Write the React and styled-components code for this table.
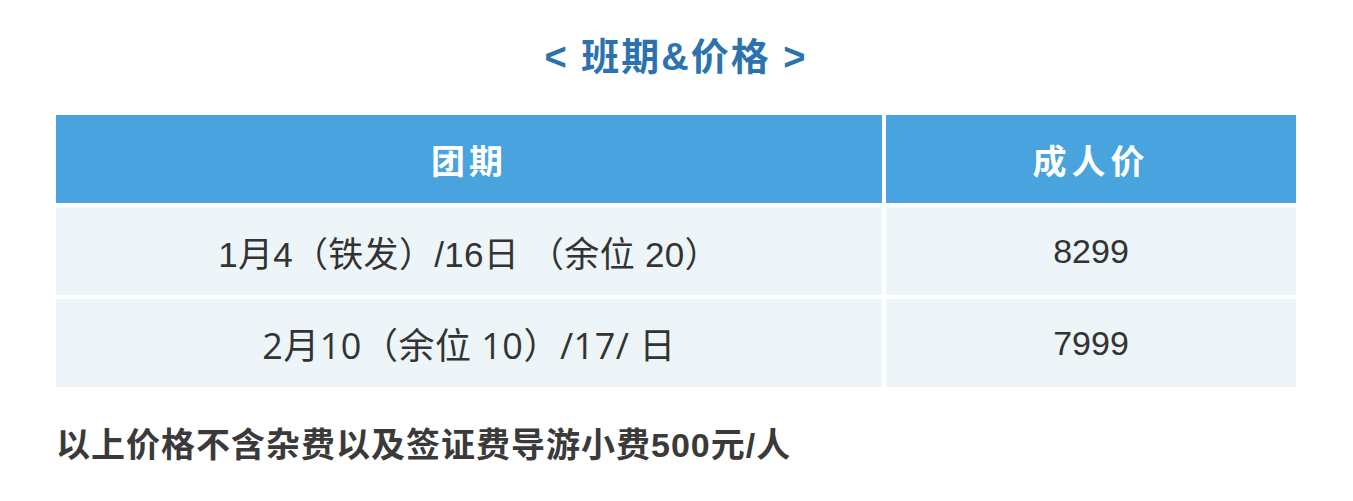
import { Fragment } from "react";
import styled, { createGlobalStyle } from "styled-components";

const GlobalStyle = createGlobalStyle`
  html, body {
    margin: 0;
    padding: 0;
    background: #ffffff;
  }
  body {
    font-family: "Liberation Sans", "Noto Sans CJK SC", sans-serif;
  }
`;

const Page = styled.div`
  width: 1240px;
  padding: 37px 0 0 56px;
`;

const Title = styled.h2`
  margin: 0 0 38px;
  font-size: 38px;
  line-height: 40px;
  font-weight: 700;
  color: #2b72af;
  text-align: center;
  letter-spacing: 2px;
`;

const Table = styled.div`
  display: grid;
  grid-template-columns: 826px 410px;
  grid-auto-rows: 88px;
  gap: 4px;
`;

const Cell = styled.div`
  display: flex;
  align-items: center;
  justify-content: center;
  background: #edf5f9;
  color: #333333;
  font-size: 34px;
`;

const HeadCell = styled(Cell)`
  background: #48a3de;
  color: #ffffff;
  font-weight: 700;
  letter-spacing: ${(p) => (p.$wide ? "5px" : "4px")};
`;

const DateCell = styled(Cell)`
  font-family: ${(p) =>
    p.$alt
      ? `"Open Sans", "Noto Sans CJK SC", sans-serif`
      : `"Liberation Sans", "Noto Sans CJK SC", sans-serif`};
  font-size: ${(p) => (p.$alt ? "36px" : "35px")};
  letter-spacing: ${(p) => (p.$alt ? "0.5px" : "0.3px")};
`;

const Note = styled.p`
  margin: 38px 0 0;
  font-size: 34px;
  line-height: 40px;
  font-weight: 700;
  color: #3a3a3a;
  letter-spacing: 1px;
`;

const rows = [
  { date: "1月4（铁发）/16日 （余位 20）", price: "8299" },
  { date: "2月10（余位 10）/17/ 日", price: "7999", alt: true },
];

export default function App() {
  return (
    <Page>
      <GlobalStyle />
      <Title>&lt; 班期&amp;价格 &gt;</Title>
      <Table>
        <HeadCell>团期</HeadCell>
        <HeadCell $wide>成人价</HeadCell>
        {rows.map((r) => (
          <Fragment key={r.price}>
            <DateCell $alt={r.alt}>{r.date}</DateCell>
            <Cell>{r.price}</Cell>
          </Fragment>
        ))}
      </Table>
      <Note>以上价格不含杂费以及签证费导游小费500元/人</Note>
    </Page>
  );
}
